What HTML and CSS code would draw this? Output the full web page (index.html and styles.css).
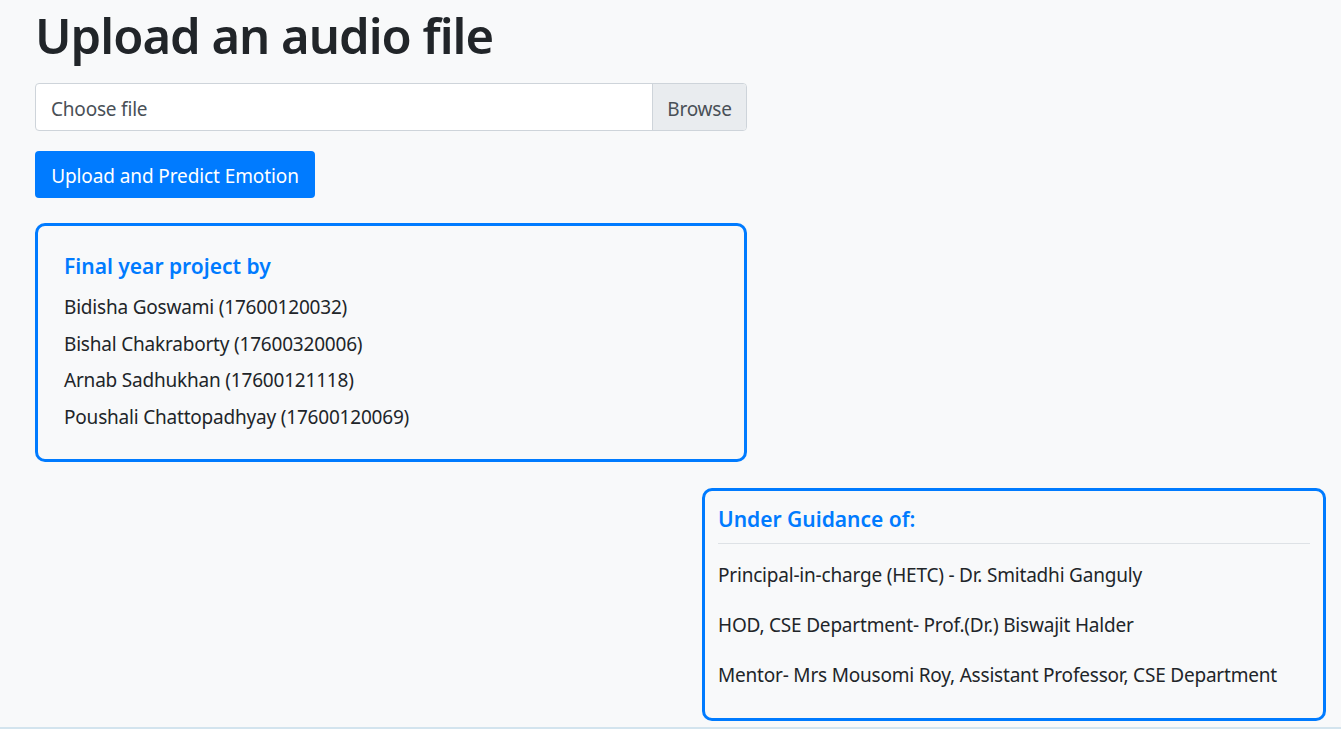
FILE: index.html
```html
<!DOCTYPE html>
<html lang="en">
<head>
<meta charset="utf-8">
<title>Upload an audio file</title>
<link rel="stylesheet" href="styles.css">
</head>
<body>
<main class="page">
  <section class="upload">
    <h1 class="title">Upload an audio file</h1>
    <div class="file-input">
      <span class="file-label">Choose file</span>
      <span class="file-browse">Browse</span>
    </div>
    <button class="btn-primary" type="button">Upload and Predict Emotion</button>
    <div class="card card-team">
      <h2 class="card-title">Final year project by</h2>
      <p class="member">Bidisha Goswami (17600120032)</p>
      <p class="member">Bishal Chakraborty (17600320006)</p>
      <p class="member">Arnab Sadhukhan (17600121118)</p>
      <p class="member">Poushali Chattopadhyay (17600120069)</p>
    </div>
  </section>
  <section class="guidance-row">
    <div class="card card-guide">
      <h2 class="card-title">Under Guidance of:</h2>
      <hr class="divider">
      <p class="guide">Principal-in-charge (HETC) - Dr. Smitadhi Ganguly</p>
      <p class="guide">HOD, CSE Department- Prof.(Dr.) Biswajit Halder</p>
      <p class="guide">Mentor- Mrs Mousomi Roy, Assistant Professor, CSE Department</p>
    </div>
  </section>
</main>
<div class="bottom-strip"></div>
</body>
</html>
```
FILE: styles.css
```css
html, body {
  margin: 0;
  padding: 0;
}
body {
  background: #f8f9fa;
  color: #212529;
  font-family: "Noto Sans", "Open Sans", sans-serif;
  font-size: 19px;
  height: 729px;
  overflow: hidden;
  position: relative;
}
.page {
  display: flex;
  flex-direction: column;
}
.upload {
  width: 712px;
  margin-left: 35px;
  display: flex;
  flex-direction: column;
}
.title {
  margin: 0;
  font-size: 49px;
  font-weight: 600;
  line-height: 70px;
  height: 83px;
  letter-spacing: -1px;
  white-space: nowrap;
}
.file-input {
  height: 48px;
  box-sizing: border-box;
  border: 1px solid #ced4da;
  border-radius: 4px;
  background: #fff;
  display: flex;
  align-items: stretch;
  overflow: hidden;
}
.file-label {
  flex: 1;
  padding-left: 15px;
  padding-top: 2px;
  color: #495057;
  line-height: 46px;
  letter-spacing: -0.2px;
}
.file-browse {
  width: 93px;
  padding-top: 2px;
  background: #e9ecef;
  border-left: 1px solid #ced4da;
  color: #495057;
  text-align: center;
  line-height: 46px;
  letter-spacing: -0.2px;
}
.btn-primary {
  margin-top: 20px;
  align-self: flex-start;
  width: 280px;
  height: 47px;
  border: none;
  border-radius: 4px;
  background: #007bff;
  color: #fff;
  font-family: inherit;
  font-size: 19px;
  padding: 2px 0 0;
  letter-spacing: -0.1px;
}
.card {
  box-sizing: border-box;
  border: 3px solid #007bff;
  border-radius: 10px;
}
.card-team {
  margin-top: 25px;
  height: 239px;
  padding: 25px 26px 0;
}
.card-title {
  margin: 0;
  color: #007bff;
  font-size: 21px;
  font-weight: 600;
  line-height: 30px;
}
.member {
  margin: 0;
  line-height: 36.7px;
  letter-spacing: -0.2px;
}
.card-team .card-title {
  margin-bottom: 8px;
}
.guidance-row {
  display: flex;
  justify-content: flex-end;
  padding-right: 15px;
  margin-top: 26px;
}
.card-guide {
  width: 624px;
  height: 233px;
  padding: 13px 13px 0;
}
.divider {
  border: 0;
  border-top: 1px solid #dee2e6;
  margin: 9px 0 6px;
}
.guide {
  margin: 0;
  line-height: 50px;
  letter-spacing: -0.2px;
}
.bottom-strip {
  position: absolute;
  left: 0;
  right: 0;
  bottom: 0;
  height: 2px;
  background: #d3e4ee;
}
```
